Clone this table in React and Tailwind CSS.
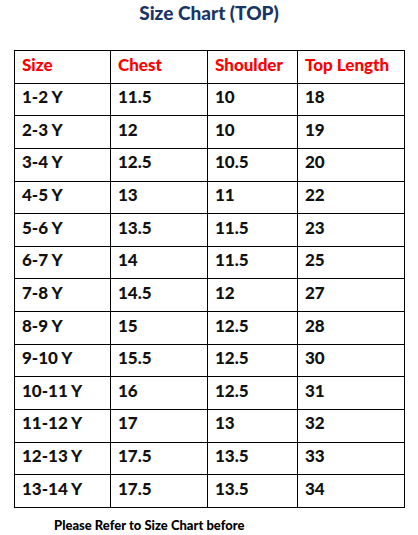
const rows = [
  ["1-2 Y", "11.5", "10", "18"],
  ["2-3 Y", "12", "10", "19"],
  ["3-4 Y", "12.5", "10.5", "20"],
  ["4-5 Y", "13", "11", "22"],
  ["5-6 Y", "13.5", "11.5", "23"],
  ["6-7 Y", "14", "11.5", "25"],
  ["7-8 Y", "14.5", "12", "27"],
  ["8-9 Y", "15", "12.5", "28"],
  ["9-10 Y", "15.5", "12.5", "30"],
  ["10-11 Y", "16", "12.5", "31"],
  ["11-12 Y", "17", "13", "32"],
  ["12-13 Y", "17.5", "13.5", "33"],
  ["13-14 Y", "17.5", "13.5", "34"],
];

const widths = ["w-[96px]", "w-[97px]", "w-[90px]", "w-[107px]"];

const Row = ({ cells, head }) => (
  <div className="flex h-[32.64px] border-b border-black">
    {cells.map((c, i) => (
      <div
        key={i}
        className={`${widths[i]} flex items-center border-r border-black pl-[7px] pb-[5px] ${
          head ? "text-[#ff0000]" : "text-[#111]"
        }`}
      >
        {c}
      </div>
    ))}
  </div>
);

export default function App() {
  return (
    <div className="w-[418px] h-[535px] bg-white font-['Lato',sans-serif] font-black">
      <h1 className="h-[50px] text-center text-[19px] leading-[26px] text-[#1a3466]">
        Size Chart (TOP)
      </h1>
      <div className="ml-[14px] w-[391px] border-l border-t border-black text-[17px]">
        <Row head cells={["Size", "Chest", "Shoulder", "Top Length"]} />
        {rows.map((r) => (
          <Row key={r[0]} cells={r} />
        ))}
      </div>
      <p className="mt-[8px] pl-[54px] text-[13px] leading-[18px] text-black">
        Please Refer to Size Chart before
      </p>
    </div>
  );
}
